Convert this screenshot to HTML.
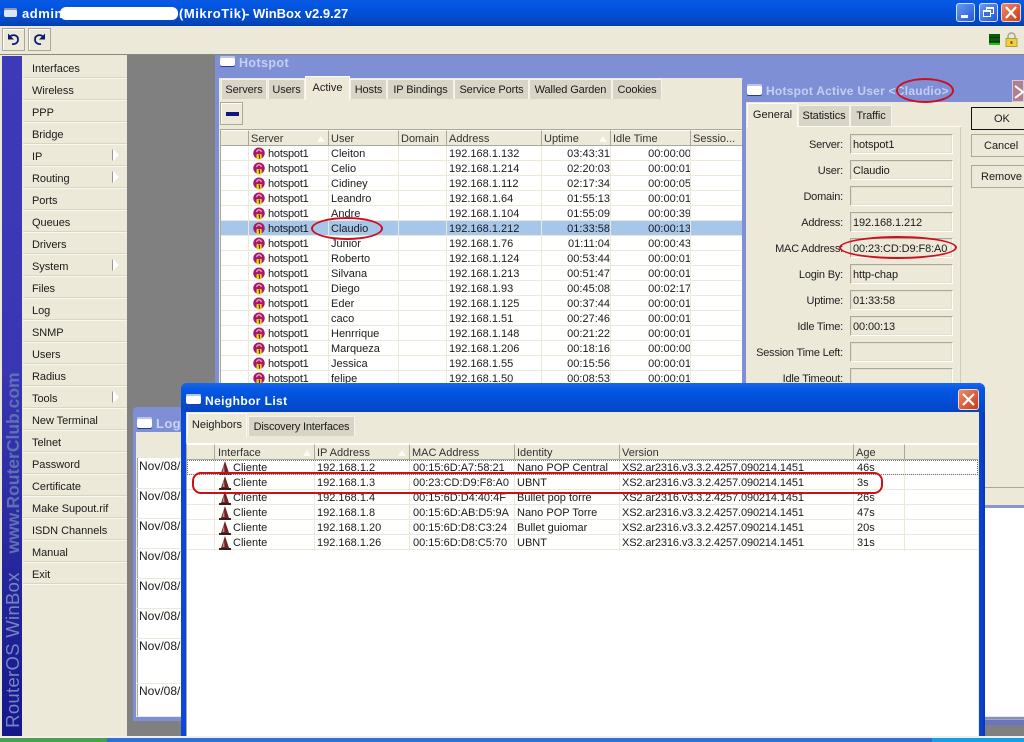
<!DOCTYPE html>
<html><head><meta charset="utf-8"><title>WinBox</title>
<style>
html,body{margin:0;padding:0;width:1024px;height:742px;overflow:hidden;background:#808080}
body{font:11px/15px "Liberation Sans",sans-serif;color:#1a1a1a}
div,span,svg{position:absolute;box-sizing:border-box;white-space:nowrap}
#p{left:0;top:0;width:1024px;height:742px;overflow:hidden;background:#808080}
.bg{background:#ece9d8}
.btn{background:#ece9d8;border:1px solid #aca899;box-shadow:inset 1px 1px 0 #fff}
.m{left:23px;width:104px;height:22px;border-bottom:1px solid #f8f7f0;box-shadow:inset 0 -1px 0 #d8d5c4;padding-left:9px;line-height:25px;font-size:11px;letter-spacing:-.05px}
.arr{left:90px;top:4px;width:0;height:0;border-left:6px solid #fff;border-top:6px solid transparent;border-bottom:6px solid transparent;filter:drop-shadow(-1px 0 0 #999)}
.tab{top:79px;height:20px;background:#d9d5c6;border:1px solid #f4f3ec;border-bottom:0;text-align:center;line-height:21px;font-size:11px;letter-spacing:-.1px}
.tabon{background:#ece9d8;border:1px solid #fbfaf5;border-bottom:0;text-align:center;font-size:11px}
.hd{background:#ece9d8;border-right:1px solid #aca899;border-bottom:1px solid #aca899;border-top:1px solid #fff;height:16px;padding-left:2px;line-height:17px;color:#333}
.tri{top:5px;width:0;height:0;border-left:4px solid transparent;border-right:4px solid transparent;border-bottom:6px solid #fbfaf5}
.r{left:0;width:100%;height:15px;border-bottom:1px solid #ece9d8;background:#fff}
.r span{top:1px;line-height:14px}
.v{top:0;width:1px;height:100%;background:#ece9d8}
.s{left:47px;letter-spacing:-.2px}.u{left:110px}.a{left:228px}.up{right:134px}.id{right:53px}
.ic{left:32px;top:1px;width:12px;height:13px}
.nc{left:32px;top:1px;width:12px;height:14px}
.ni{left:46px}.nip{left:130px}.nm{left:226px}.nn{left:330px}.nv{left:435px;letter-spacing:-.12px}.na{left:670px}
.lb{text-align:right;right:181px;line-height:15px;font-size:11px;letter-spacing:-.2px;color:#222;margin-top:2px}
.f{left:850px;width:103px;height:20px;border:1px solid #aca899;border-right-color:#fff;border-bottom-color:#fff;box-shadow:inset 0 0 0 1px #e2dfcd;padding-left:2px;line-height:20px;font-size:11px;letter-spacing:-.1px;background:#ece9d8}
.b2{left:971px;width:60px;height:23px;background:#ece9d8;border:1px solid #aca899;text-align:center;line-height:23px;font-size:11px}
.tt{font-weight:bold;font-size:12px;letter-spacing:.4px}
.wi{background:#fff;border-radius:2px;box-shadow:inset 0 2px 0 #b9c6ea,0 1px 0 #2a3a90}
.ell{border:2px solid #cc1020;border-radius:50%}
.lg{left:139px;line-height:15px;font-size:12px}
</style></head><body><div id="p">
<svg width="0" height="0" style="left:0;top:0"><defs>
<symbol id="hs" viewBox="0 0 13 13"><circle cx="6.500" cy="6.200" r="6.200" fill="#a8186a"/><path d="M4 5a2.500 2.500 0 0 1 5 0" fill="none" stroke="#f0a8c8" stroke-width="1.400"/><rect x="3.800" y="7" width="5.600" height="6" rx=".8" fill="#f0d020"/><path d="M6 8.200h1V12" stroke="#4a3a00" stroke-width="1.200" fill="none"/></symbol>
<symbol id="cn" viewBox="0 0 12 14"><path d="M6 0L10 12H2z" fill="#6e2422"/><path d="M5 4L3.500 11h2z" fill="#c89088"/><rect x="0" y="12" width="12" height="2" fill="#3a1c1c"/></symbol>
</defs></svg>

<!-- title bar -->
<div style="left:0;top:0;width:1024px;height:26px;background:linear-gradient(#0a5be0 0,#0458e4 3px,#0250d8 12px,#0348c4 21px,#0240b0 25px)"></div>
<div class="wi" style="left:4px;top:8px;width:13px;height:9px;background:#dfe6f6;box-shadow:inset 0 2px 0 #8c96b0"></div>
<div style="left:22px;top:5px;color:#fff;font-weight:bold;font-size:13px;line-height:17px;letter-spacing:.55px">admin@</div>
<div style="left:179px;top:5px;color:#fff;font-weight:bold;font-size:13px;line-height:17px;letter-spacing:.55px">(MikroTik)</div>
<div style="left:245px;top:5px;color:#fff;font-weight:bold;font-size:13px;line-height:17px">- WinBox v2.9.27</div>
<div style="left:60px;top:7px;width:118px;height:13px;background:#fff;border-radius:6px"></div>
<div style="left:956px;top:3px;width:19px;height:19px;border:1px solid #cfe0ff;border-radius:3px;background:linear-gradient(135deg,#6a9af0,#2058d8)"><div style="left:4px;top:11px;width:7px;height:3px;background:#fff"></div></div>
<div style="left:979px;top:3px;width:19px;height:19px;border:1px solid #cfe0ff;border-radius:3px;background:linear-gradient(135deg,#6a9af0,#2058d8)"><div style="left:6px;top:3px;width:8px;height:7px;border:1px solid #fff;border-top-width:2px"></div><div style="left:3px;top:6px;width:8px;height:7px;border:1px solid #fff;border-top-width:2px;background:#3a6ee0"></div></div>
<div style="left:1001px;top:3px;width:20px;height:19px;border:1px solid #f0d8d0;border-radius:3px;background:linear-gradient(135deg,#ee8a68,#c83c18)"><svg width="18" height="17" style="left:0;top:0"><path d="M4 3l10 11M14 3L4 14" stroke="#fff" stroke-width="2.200"/></svg></div>

<!-- toolbar -->
<div class="bg" style="left:0;top:26px;width:1024px;height:29px;border-bottom:1px solid #8a887c"></div>
<div class="btn" style="left:2px;top:28px;width:23px;height:23px"><svg width="21" height="21" style="left:0;top:0"><path d="M7 7.500C10 5 15 6 15 10.500 15 14 12 15.500 9 15" fill="none" stroke="#0a1a70" stroke-width="1.800"/><path d="M5 4.500v6h6z" fill="#0a1a70"/></svg></div>
<div class="btn" style="left:28px;top:28px;width:23px;height:23px"><svg width="21" height="21" style="left:0;top:0"><path d="M14 7.500C11 5 6 6 6 10.500 6 14 9 15.500 12 15" fill="none" stroke="#0a1a70" stroke-width="1.800"/><path d="M16 4.500v6h-6z" fill="#0a1a70"/></svg></div>
<div style="left:989px;top:34px;width:11px;height:11px;background:repeating-linear-gradient(#0c5a0c 0,#0c5a0c 3px,#063806 3px,#063806 4px);border-bottom:2px solid #20c020"></div>
<svg width="13" height="15" style="left:1005px;top:32px"><path d="M3 7V4.500a3.500 3.500 0 0 1 7 0V7" fill="none" stroke="#a8a490" stroke-width="1.500"/><rect x="1" y="6.500" width="11" height="8" fill="#f0d040" stroke="#b0a040"/><rect x="5.500" y="9" width="2" height="3" fill="#806000"/></svg>

<!-- bottom taskbar -->
<div style="left:0;top:738px;width:1024px;height:4px;background:#2f6fd8"></div>
<div style="left:0;top:738px;width:107px;height:4px;background:#4aa04a"></div>
<div style="left:932px;top:738px;width:92px;height:4px;background:#14a0e8"></div>
<div style="left:0;top:736px;width:1024px;height:2px;background:#f0efe8"></div>

<!-- left strip + menu -->
<div class="bg" style="left:0;top:55px;width:127px;height:681px"></div>
<div style="left:2px;top:56px;width:20px;height:680px;background:linear-gradient(#3d39b8 0,#3a36b4 45%,#2a2aa0 70%,#15178a 100%)"></div>
<div style="left:-87px;top:453px;width:200px;height:20px;transform:rotate(-90deg);color:#5f70b4;font-weight:bold;font-size:17.500px;line-height:20px;text-align:center">www.RouterClub.com</div>
<div style="left:-87px;top:640px;width:180px;height:20px;margin-left:10px;transform:rotate(-90deg);color:#7585c0;font-size:18.500px;line-height:20px;text-align:center;letter-spacing:.3px">RouterOS WinBox</div>

<div class="m" style="top:57px">Interfaces</div>
<div class="m" style="top:79px">Wireless</div>
<div class="m" style="top:101px">PPP</div>
<div class="m" style="top:123px">Bridge</div>
<div class="m" style="top:145px">IP<div class="arr"></div></div>
<div class="m" style="top:167px">Routing<div class="arr"></div></div>
<div class="m" style="top:189px">Ports</div>
<div class="m" style="top:211px">Queues</div>
<div class="m" style="top:233px">Drivers</div>
<div class="m" style="top:255px">System<div class="arr"></div></div>
<div class="m" style="top:277px">Files</div>
<div class="m" style="top:299px">Log</div>
<div class="m" style="top:321px">SNMP</div>
<div class="m" style="top:343px">Users</div>
<div class="m" style="top:365px">Radius</div>
<div class="m" style="top:387px">Tools<div class="arr"></div></div>
<div class="m" style="top:409px">New Terminal</div>
<div class="m" style="top:431px">Telnet</div>
<div class="m" style="top:453px">Password</div>
<div class="m" style="top:475px">Certificate</div>
<div class="m" style="top:497px">Make Supout.rif</div>
<div class="m" style="top:519px">ISDN Channels</div>
<div class="m" style="top:541px">Manual</div>
<div class="m" style="top:563px">Exit</div>

<!-- log window -->
<div style="left:133px;top:407px;width:891px;height:314px;background:#7e8fd6;border-radius:4px 4px 0 0"></div>
<div class="bg" style="left:136px;top:432px;width:888px;height:285px"></div>
<div style="left:137px;top:458px;width:887px;height:258px;background:#fff;border-left:1px solid #aca899"></div>
<div class="wi" style="left:137px;top:417px;width:15px;height:11px"></div>
<div class="tt" style="left:156px;top:416px;color:#c8d4f4;font-size:13px">Log</div>
<div class="lg" style="top:459px">Nov/08/</div><div class="lg" style="top:489px">Nov/08/</div><div class="lg" style="top:519px">Nov/08/</div><div class="lg" style="top:549px">Nov/08/</div><div class="lg" style="top:579px">Nov/08/</div><div class="lg" style="top:609px">Nov/08/</div><div class="lg" style="top:639px">Nov/08/</div><div class="lg" style="top:684px">Nov/08/</div>
<div style="left:137px;top:488px;width:45px;height:1px;background:#ece9d8"></div><div style="left:137px;top:518px;width:45px;height:1px;background:#ece9d8"></div><div style="left:137px;top:548px;width:45px;height:1px;background:#ece9d8"></div><div style="left:137px;top:578px;width:45px;height:1px;background:#ece9d8"></div><div style="left:137px;top:608px;width:45px;height:1px;background:#ece9d8"></div><div style="left:137px;top:638px;width:45px;height:1px;background:#ece9d8"></div><div style="left:137px;top:683px;width:45px;height:1px;background:#ece9d8"></div>
<div style="left:985px;top:505px;width:39px;height:3px;background:#8a96cc"></div>
<div style="left:985px;top:719px;width:39px;height:6px;background:#6a74c0;border-top:1px solid #aca899"></div>

<!-- hotspot window -->
<div style="left:215px;top:55px;width:809px;height:335px;background:#7e8fd6"></div>
<div class="bg" style="left:219px;top:78px;width:530px;height:312px"></div>
<div class="wi" style="left:220px;top:56px;width:15px;height:10px"></div>
<div class="tt" style="left:239px;top:56px;color:#c4d0f2;font-size:12.500px">Hotspot</div>
<div class="tab" style="left:221px;width:46px">Servers</div>
<div class="tab" style="left:268px;width:37px">Users</div>
<div class="tab" style="left:350px;width:37px">Hosts</div>
<div class="tab" style="left:387px;width:67px">IP Bindings</div>
<div class="tab" style="left:454px;width:75px">Service Ports</div>
<div class="tab" style="left:529px;width:83px">Walled Garden</div>
<div class="tab" style="left:612px;width:50px">Cookies</div>
<div class="tabon" style="left:305px;top:76px;width:45px;height:24px;line-height:23px">Active</div>
<div class="btn" style="left:220px;top:102px;width:23px;height:23px"><div style="left:5px;top:9px;width:13px;height:4px;background:#101880"></div></div>

<!-- hotspot table -->
<div style="left:220px;top:129px;width:523px;height:261px;background:#fff;border-left:1px solid #aca899;border-top:1px solid #aca899;overflow:hidden">
<div class="hd" style="left:0;top:0;width:28px"></div>
<div class="hd" style="left:28px;top:0;width:80px">Server<div class="tri" style="left:68px"></div></div>
<div class="hd" style="left:108px;top:0;width:70px">User</div>
<div class="hd" style="left:178px;top:0;width:48px">Domain</div>
<div class="hd" style="left:226px;top:0;width:95px">Address</div>
<div class="hd" style="left:321px;top:0;width:69px">Uptime<div class="tri" style="left:57px"></div></div>
<div class="hd" style="left:390px;top:0;width:80px">Idle Time</div>
<div class="hd" style="left:470px;top:0;width:53px">Sessio...</div>
<div style="left:0;top:16px;width:523px;height:245px">
<div class="r" style="top:0"><svg class="ic"><use href="#hs"/></svg><span class="s">hotspot1</span><span class="u">Cleiton</span><span class="a">192.168.1.132</span><span class="up">03:43:31</span><span class="id">00:00:00</span></div>
<div class="r" style="top:15px"><svg class="ic"><use href="#hs"/></svg><span class="s">hotspot1</span><span class="u">Celio</span><span class="a">192.168.1.214</span><span class="up">02:20:03</span><span class="id">00:00:01</span></div>
<div class="r" style="top:30px"><svg class="ic"><use href="#hs"/></svg><span class="s">hotspot1</span><span class="u">Cidiney</span><span class="a">192.168.1.112</span><span class="up">02:17:34</span><span class="id">00:00:05</span></div>
<div class="r" style="top:45px"><svg class="ic"><use href="#hs"/></svg><span class="s">hotspot1</span><span class="u">Leandro</span><span class="a">192.168.1.64</span><span class="up">01:55:13</span><span class="id">00:00:01</span></div>
<div class="r" style="top:60px"><svg class="ic"><use href="#hs"/></svg><span class="s">hotspot1</span><span class="u">Andre</span><span class="a">192.168.1.104</span><span class="up">01:55:09</span><span class="id">00:00:39</span></div>
<div class="r" style="top:75px;background:#a6c6ea"><svg class="ic"><use href="#hs"/></svg><span class="s">hotspot1</span><span class="u">Claudio</span><span class="a">192.168.1.212</span><span class="up">01:33:58</span><span class="id">00:00:13</span></div>
<div class="r" style="top:90px"><svg class="ic"><use href="#hs"/></svg><span class="s">hotspot1</span><span class="u">Junior</span><span class="a">192.168.1.76</span><span class="up">01:11:04</span><span class="id">00:00:43</span></div>
<div class="r" style="top:105px"><svg class="ic"><use href="#hs"/></svg><span class="s">hotspot1</span><span class="u">Roberto</span><span class="a">192.168.1.124</span><span class="up">00:53:44</span><span class="id">00:00:01</span></div>
<div class="r" style="top:120px"><svg class="ic"><use href="#hs"/></svg><span class="s">hotspot1</span><span class="u">Silvana</span><span class="a">192.168.1.213</span><span class="up">00:51:47</span><span class="id">00:00:01</span></div>
<div class="r" style="top:135px"><svg class="ic"><use href="#hs"/></svg><span class="s">hotspot1</span><span class="u">Diego</span><span class="a">192.168.1.93</span><span class="up">00:45:08</span><span class="id">00:02:17</span></div>
<div class="r" style="top:150px"><svg class="ic"><use href="#hs"/></svg><span class="s">hotspot1</span><span class="u">Eder</span><span class="a">192.168.1.125</span><span class="up">00:37:44</span><span class="id">00:00:01</span></div>
<div class="r" style="top:165px"><svg class="ic"><use href="#hs"/></svg><span class="s">hotspot1</span><span class="u">caco</span><span class="a">192.168.1.51</span><span class="up">00:27:46</span><span class="id">00:00:01</span></div>
<div class="r" style="top:180px"><svg class="ic"><use href="#hs"/></svg><span class="s">hotspot1</span><span class="u">Henrrique</span><span class="a">192.168.1.148</span><span class="up">00:21:22</span><span class="id">00:00:01</span></div>
<div class="r" style="top:195px"><svg class="ic"><use href="#hs"/></svg><span class="s">hotspot1</span><span class="u">Marqueza</span><span class="a">192.168.1.206</span><span class="up">00:18:16</span><span class="id">00:00:00</span></div>
<div class="r" style="top:210px"><svg class="ic"><use href="#hs"/></svg><span class="s">hotspot1</span><span class="u">Jessica</span><span class="a">192.168.1.55</span><span class="up">00:15:56</span><span class="id">00:00:01</span></div>
<div class="r" style="top:225px"><svg class="ic"><use href="#hs"/></svg><span class="s">hotspot1</span><span class="u">felipe</span><span class="a">192.168.1.50</span><span class="up">00:08:53</span><span class="id">00:00:01</span></div>
<div class="v" style="left:27px"></div><div class="v" style="left:107px"></div><div class="v" style="left:177px"></div><div class="v" style="left:225px"></div><div class="v" style="left:320px"></div><div class="v" style="left:389px"></div><div class="v" style="left:469px"></div>
</div></div>
<div class="ell" style="left:311px;top:217px;width:72px;height:23px"></div>

<!-- active user window -->
<div style="left:742px;top:75px;width:282px;height:412px;background:#7e8fd6;border-radius:5px 0 0 0"></div>
<div class="bg" style="left:746px;top:102px;width:278px;height:385px"></div>
<div class="bg" style="left:985px;top:488px;width:39px;height:17px"></div>
<div style="left:985px;top:487px;width:39px;height:1px;background:#aca899"></div>
<div style="left:960px;top:127px;width:1px;height:262px;background:#cfccbc"></div>
<div style="left:746px;top:126px;width:215px;height:1px;background:#fbfaf5"></div>
<div class="wi" style="left:747px;top:84px;width:15px;height:11px"></div>
<div class="tt" style="left:766px;top:84px;color:#c4d0f2;font-size:12px;letter-spacing:.25px">Hotspot Active User &lt;Claudio&gt;</div>
<div class="ell" style="left:896px;top:78px;width:58px;height:25px"></div>
<div style="left:1012px;top:80px;width:12px;height:22px;background:#b08090;border:1px solid #d8c8d8"><svg width="12" height="20" style="left:0;top:0"><path d="M2 5l8 6-8 6" fill="none" stroke="#fff" stroke-width="2"/></svg></div>
<div class="tabon" style="left:747px;top:103px;width:51px;height:24px;line-height:22px">General</div>
<div class="tab" style="left:798px;top:105px;width:52px;height:21px">Statistics</div>
<div class="tab" style="left:850px;top:105px;width:42px;height:21px">Traffic</div>
<div class="lb" style="top:136px">Server:</div><div class="f" style="top:134px">hotspot1</div>
<div class="lb" style="top:162px">User:</div><div class="f" style="top:160px">Claudio</div>
<div class="lb" style="top:188px">Domain:</div><div class="f" style="top:186px"></div>
<div class="lb" style="top:214px">Address:</div><div class="f" style="top:212px">192.168.1.212</div>
<div class="lb" style="top:240px">MAC Address:</div><div class="f" style="top:238px">00:23:CD:D9:F8:A0</div>
<div class="lb" style="top:266px">Login By:</div><div class="f" style="top:264px">http-chap</div>
<div class="lb" style="top:292px">Uptime:</div><div class="f" style="top:290px">01:33:58</div>
<div class="lb" style="top:318px">Idle Time:</div><div class="f" style="top:316px">00:00:13</div>
<div class="lb" style="top:344px">Session Time Left:</div><div class="f" style="top:342px"></div>
<div class="lb" style="top:370px">Idle Timeout:</div><div class="f" style="top:368px"></div>
<div class="b2" style="top:107px;border-color:#111"><span style="left:22px;top:0">OK</span></div>
<div class="b2" style="top:134px"><span style="left:12px;top:0">Cancel</span></div>
<div class="b2" style="top:165px"><span style="left:9px;top:0">Remove</span></div>
<div class="ell" style="left:839px;top:236px;width:118px;height:23px"></div>

<!-- neighbor window -->
<div style="left:181px;top:383px;width:804px;height:353px;background:#0a48d8;border-radius:6px 6px 0 0"></div>
<div style="left:181px;top:383px;width:804px;height:29px;background:linear-gradient(#1a68ec 0,#0458e4 6px,#0250d8 16px,#0346c4 29px);border-radius:6px 6px 0 0"></div>
<div style="left:979px;top:412px;width:6px;height:324px;background:linear-gradient(90deg,#0a48d8,#0836b8)"></div>
<div class="bg" style="left:186px;top:412px;width:793px;height:324px"></div>
<div class="wi" style="left:186px;top:394px;width:15px;height:10px"></div>
<div class="tt" style="left:205px;top:394px;color:#fff;font-size:12px">Neighbor List</div>
<div style="left:958px;top:389px;width:21px;height:21px;border:1px solid #f0d8d0;border-radius:3px;background:linear-gradient(135deg,#ee8a68,#c83c18)"><svg width="19" height="19" style="left:0;top:0"><path d="M4 4l11 11M15 4L4 15" stroke="#fff" stroke-width="2.200"/></svg></div>
<div class="tabon" style="left:187px;top:413px;width:60px;height:24px;line-height:23px">Neighbors</div>
<div class="tab" style="left:248px;top:416px;width:107px;height:20px;font-size:11px;letter-spacing:-.2px">Discovery Interfaces</div>

<!-- neighbor table -->
<div style="left:186px;top:443px;width:792px;height:293px;background:#fff;border-left:1px solid #aca899;border-top:1px solid #fff;overflow:hidden">
<div class="hd" style="left:0;top:0;width:28px"></div>
<div class="hd" style="left:28px;top:0;width:100px;padding-left:3px">Interface<div class="tri" style="left:88px"></div></div>
<div class="hd" style="left:128px;top:0;width:95px">IP Address<div class="tri" style="left:83px"></div></div>
<div class="hd" style="left:223px;top:0;width:105px">MAC Address</div>
<div class="hd" style="left:328px;top:0;width:105px">Identity</div>
<div class="hd" style="left:433px;top:0;width:234px">Version</div>
<div class="hd" style="left:667px;top:0;width:51px">Age</div>
<div class="hd" style="left:718px;top:0;width:74px"></div>
<div style="left:0;top:16px;width:792px;height:91px">
<div class="r" style="top:0"><svg class="nc"><use href="#cn"/></svg><span class="ni">Cliente</span><span class="nip">192.168.1.2</span><span class="nm">00:15:6D:A7:58:21</span><span class="nn">Nano POP Central</span><span class="nv">XS2.ar2316.v3.3.2.4257.090214.1451</span><span class="na">46s</span></div>
<div class="r" style="top:15px"><svg class="nc"><use href="#cn"/></svg><span class="ni">Cliente</span><span class="nip">192.168.1.3</span><span class="nm">00:23:CD:D9:F8:A0</span><span class="nn">UBNT</span><span class="nv">XS2.ar2316.v3.3.2.4257.090214.1451</span><span class="na">3s</span></div>
<div class="r" style="top:30px"><svg class="nc"><use href="#cn"/></svg><span class="ni">Cliente</span><span class="nip">192.168.1.4</span><span class="nm">00:15:6D:D4:40:4F</span><span class="nn">Bullet pop torre</span><span class="nv">XS2.ar2316.v3.3.2.4257.090214.1451</span><span class="na">26s</span></div>
<div class="r" style="top:45px"><svg class="nc"><use href="#cn"/></svg><span class="ni">Cliente</span><span class="nip">192.168.1.8</span><span class="nm">00:15:6D:AB:D5:9A</span><span class="nn">Nano POP Torre</span><span class="nv">XS2.ar2316.v3.3.2.4257.090214.1451</span><span class="na">47s</span></div>
<div class="r" style="top:60px"><svg class="nc"><use href="#cn"/></svg><span class="ni">Cliente</span><span class="nip">192.168.1.20</span><span class="nm">00:15:6D:D8:C3:24</span><span class="nn">Bullet guiomar</span><span class="nv">XS2.ar2316.v3.3.2.4257.090214.1451</span><span class="na">20s</span></div>
<div class="r" style="top:75px"><svg class="nc"><use href="#cn"/></svg><span class="ni">Cliente</span><span class="nip">192.168.1.26</span><span class="nm">00:15:6D:D8:C5:70</span><span class="nn">UBNT</span><span class="nv">XS2.ar2316.v3.3.2.4257.090214.1451</span><span class="na">31s</span></div>
<div class="v" style="left:27px"></div><div class="v" style="left:127px"></div><div class="v" style="left:222px"></div><div class="v" style="left:327px"></div><div class="v" style="left:432px"></div><div class="v" style="left:666px"></div><div class="v" style="left:717px"></div>
<div style="left:0;top:0;width:791px;height:15px;border:1px dotted #777"></div>
</div></div>
<div style="left:192px;top:472px;width:691px;height:22px;border:2px solid #cc1018;border-radius:9px"></div>
</div></body></html>
